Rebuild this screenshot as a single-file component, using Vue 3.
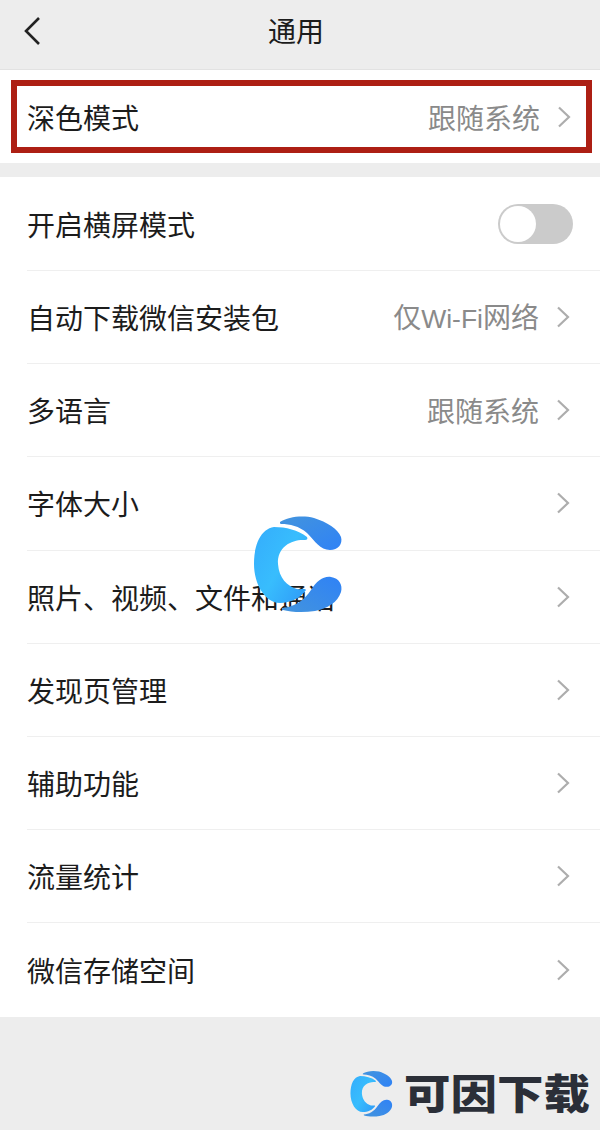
<script setup>
const rows = [
  { label: '自动下载微信安装包', value: '仅', latin: 'Wi-Fi', tail: '网络' },
  { label: '多语言', value: '跟随系统' },
  { label: '字体大小' },
  { label: '照片、视频、文件和通话' },
  { label: '发现页管理' },
  { label: '辅助功能' },
  { label: '流量统计' },
  { label: '微信存储空间' },
]
</script>

<template>
  <div class="page">
    <svg width="0" height="0" class="defs">
      <defs>
        <linearGradient id="cMain" x1="0" y1="0.1" x2="1" y2="0.9">
          <stop offset="0" stop-color="#35aefc" />
          <stop offset="0.5" stop-color="#38bdfd" />
          <stop offset="1" stop-color="#2f9cf8" />
        </linearGradient>
        <linearGradient id="cTop" x1="0" y1="0" x2="1" y2="1">
          <stop offset="0" stop-color="#4394dd" />
          <stop offset="1" stop-color="#2f82f6" />
        </linearGradient>
        <linearGradient id="cBot" x1="0" y1="1" x2="1" y2="0">
          <stop offset="0" stop-color="#4394dd" />
          <stop offset="1" stop-color="#2f82f6" />
        </linearGradient>
        <g id="cLogo">
          <path fill="url(#cMain)" d="M44 27C56 27 68 30 77 37C78 39 77 40 75 40C63 39 47 46 48 64C49 78 57 86 67 89C71 90 75 88 76 90C71 98 60 103 50 103C35 103 24 84 24 64C24 44 31 29 44 27Z" />
          <path fill="url(#cTop)" d="M50 22C58 17 72 15 84 18C97 22 108 29 111 37C113 44 108 50 100 50C90 50 85 41 77 33C69 26 60 24 51 24C50 24 50 23 50 22Z" />
          <path fill="url(#cBot)" d="M52 108C63 107 73 102 81 90C87 81 93 76 101 77C109 78 113 85 111 92C108 102 97 109 85 111C73 113 60 112 53 110C52 110 52 109 52 108Z" />
        </g>
      </defs>
    </svg>

    <header class="nav">
      <svg class="back" viewBox="0 0 22 30" width="22" height="30">
        <path d="M18 2 5 15l13 13" fill="none" stroke="#222" stroke-width="2.6" />
      </svg>
      <h1 class="title">通用</h1>
    </header>

    <section class="top">
      <div class="marked">
        <span class="label">深色模式</span>
        <span class="value">跟随系统</span>
        <svg class="chev" viewBox="0 0 14 22" width="14" height="22">
          <path d="M2 1.500 12 11 2 20.500" fill="none" stroke="#adadad" stroke-width="2.200" />
        </svg>
      </div>
    </section>

    <section class="list">
      <div class="row">
        <span class="label">开启横屏模式</span>
        <span class="toggle"><span class="knob"></span></span>
      </div>
      <div v-for="r in rows" :key="r.label" class="row">
        <span class="label">{{ r.label }}</span>
        <span v-if="r.value" class="value">{{ r.value }}<span v-if="r.latin" class="latin">{{ r.latin }}</span>{{ r.tail }}</span>
        <svg class="chev" viewBox="0 0 14 22" width="14" height="22">
          <path d="M2 1.500 12 11 2 20.500" fill="none" stroke="#adadad" stroke-width="2.200" />
        </svg>
      </div>
    </section>

    <svg class="mark" viewBox="0 0 130 130" width="130" height="130"><use href="#cLogo" /></svg>

    <div class="brand">
      <svg class="brand-icon" viewBox="0 0 130 130" width="62" height="62"><use href="#cLogo" /></svg>
      <span class="brand-text">可因下载</span>
    </div>
  </div>
</template>

<style>
html, body { margin: 0; background: #ededed; }
</style>

<style scoped>
.page {
  position: relative;
  width: 600px;
  height: 1130px;
  overflow: hidden;
  background: #ededed;
  color: #1c1c1c;
  font-family: "Noto Sans CJK SC", "Noto Sans", sans-serif;
}
.defs { position: absolute; }
.nav {
  height: 69px;
  display: flex;
  align-items: flex-start;
  justify-content: center;
  position: relative;
  border-bottom: 1px solid #e2e2e2;
}
.back { position: absolute; left: 21px; top: 16px; }
.title { margin: 0 8px 0 0; font-size: 28px; font-weight: 400; line-height: 60px; }
.top {
  height: 93px;
  background: #fff;
  padding: 10px 8px 10px 11px;
  box-sizing: border-box;
}
.marked {
  height: 73px;
  box-sizing: border-box;
  border: 6px solid #ad1f14;
  display: flex;
  align-items: center;
  padding: 0 15px 0 10px;
}
.list {
  margin-top: 14px;
  height: 840px;
  background: #fff;
  padding: 1px 0 0 27px;
  box-sizing: border-box;
}
.row {
  height: 93.150px;
  box-sizing: border-box;
  display: flex;
  align-items: center;
  padding-right: 30px;
  border-bottom: 1px solid #efefef;
}
.row:last-child { border-bottom: 0; }
.label { font-size: 28px; line-height: 40px; flex: 1; white-space: nowrap; }
.value { font-size: 28px; line-height: 40px; color: #8a8a8a; margin-right: 17px; white-space: nowrap; }
.latin { font-family: "Liberation Sans", sans-serif; font-size: 26.500px; }
.chev { flex: none; }
.toggle {
  width: 75px;
  height: 40px;
  border-radius: 20px;
  background: #cbcbcb;
  flex: none;
  margin-right: -3px;
  display: flex;
  align-items: center;
  padding-left: 2px;
  box-sizing: border-box;
}
.knob { width: 36px; height: 36px; border-radius: 50%; background: #fff; }
.mark { position: absolute; left: 230px; top: 500px; }
.brand {
  position: absolute;
  left: 339px;
  top: 1063px;
  display: flex;
  align-items: center;
  height: 62px;
}
.brand-icon { flex: none; }
.brand-text {
  margin: -6px 0 0 3px;
  font-size: 46px;
  line-height: 62px;
  font-weight: 900;
  color: #2b2f38;
  white-space: nowrap;
  transform: scale(1.01, 0.88);
  transform-origin: left center;
}
</style>
